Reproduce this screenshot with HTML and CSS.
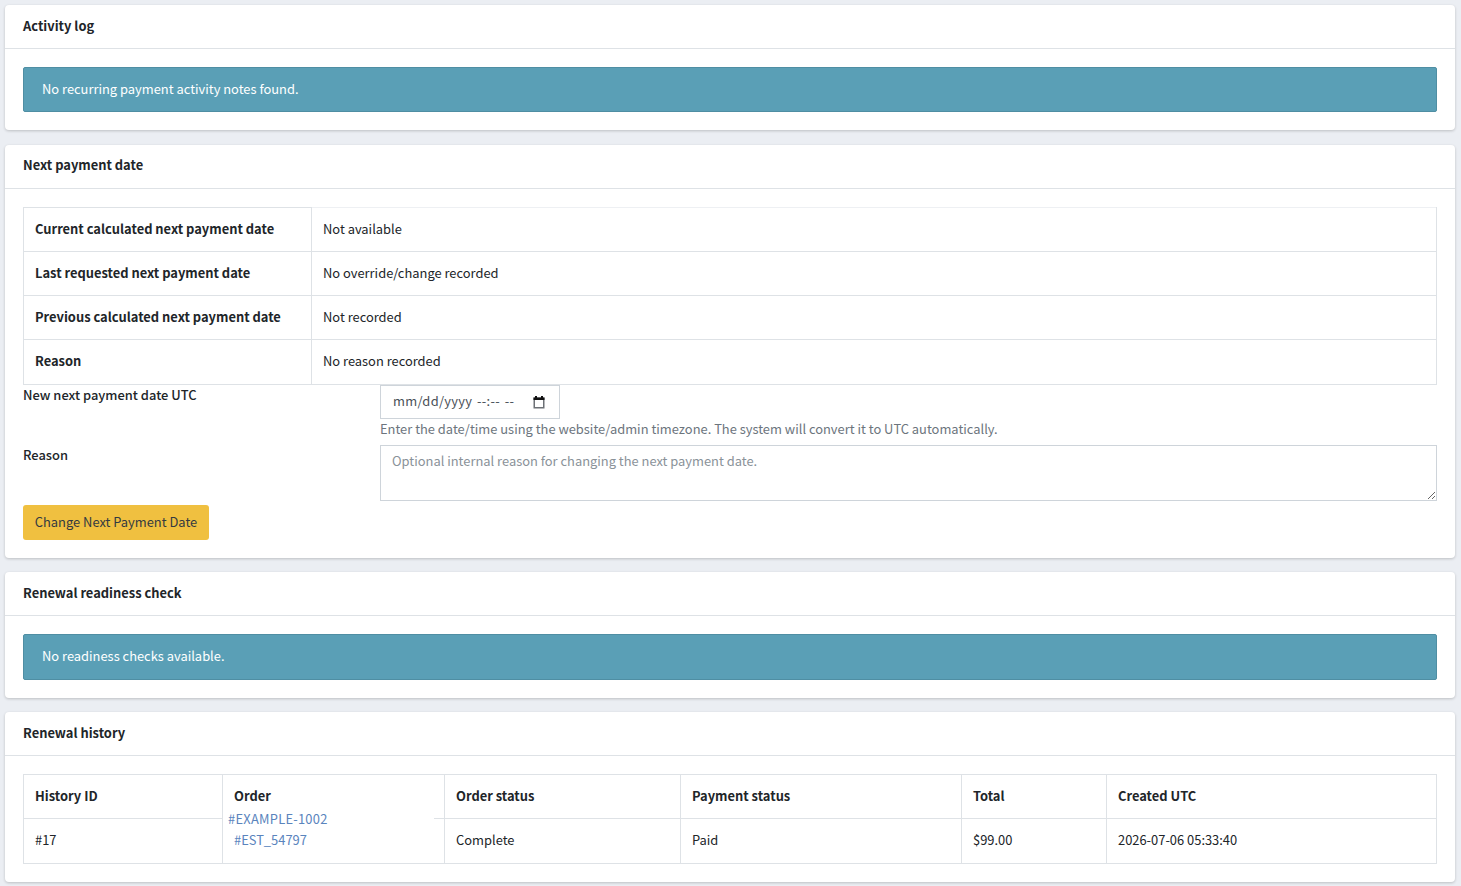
FILE: index.html
```html
<!DOCTYPE html>
<html lang="en">
<head>
    <meta charset="UTF-8">
    <meta name="viewport" content="width=device-width, initial-scale=1.0">
    <title>Recurring payment</title>
    <link rel="stylesheet" href="styles.css">
</head>
<body>
    <section class="card">
        <h3 class="card-header">Activity log</h3>
        <div class="card-body">
            <div class="alert">No recurring payment activity notes found.</div>
        </div>
    </section>

    <section class="card">
        <h3 class="card-header card-header-next">Next payment date</h3>
        <div class="card-body">
            <table class="table table-details">
                <tr>
                    <th>Current calculated next payment date</th>
                    <td>Not available</td>
                </tr>
                <tr>
                    <th>Last requested next payment date</th>
                    <td>No override/change recorded</td>
                </tr>
                <tr>
                    <th>Previous calculated next payment date</th>
                    <td>Not recorded</td>
                </tr>
                <tr class="last-row">
                    <th>Reason</th>
                    <td>No reason recorded</td>
                </tr>
            </table>

            <form class="date-form">
                <label for="nextDate">New next payment date UTC</label>
                <div class="field">
                    <div class="date-input">
                        <input type="text" id="nextDate" value="mm/dd/yyyy --:-- --">
                        <svg class="date-icon" width="14" height="14" viewBox="0 0 14 14">
                            <path d="M3 1h2v1.5h4V1h2v1.5h1.5v11h-11v-11H3z" fill="#6d7176"/>
                            <path d="M3 1h2v1.5h4V1h2v1.5h1.5V5h-11V2.5H3z" fill="#111"/>
                            <rect x="3" y="5" width="8" height="7" fill="#fff"/>
                        </svg>
                    </div>
                    <small class="help">Enter the date/time using the website/admin timezone. The system will convert it to UTC automatically.</small>
                </div>

                <label for="reason">Reason</label>
                <div class="field">
                    <textarea id="reason" class="reason-input" placeholder="Optional internal reason for changing the next payment date."></textarea>
                </div>

                <button type="button" class="btn-warning">Change Next Payment Date</button>
            </form>
        </div>
    </section>

    <section class="card">
        <h3 class="card-header">Renewal readiness check</h3>
        <div class="card-body">
            <div class="alert alert-tall">No readiness checks available.</div>
        </div>
    </section>

    <section class="card">
        <h3 class="card-header">Renewal history</h3>
        <div class="card-body">
            <table class="table table-history">
                <colgroup>
                    <col class="col-id">
                    <col class="col-order">
                    <col class="col-status">
                    <col class="col-payment">
                    <col class="col-total">
                    <col>
                </colgroup>
                <tr>
                    <th>History ID</th>
                    <th>Order</th>
                    <th>Order status</th>
                    <th>Payment status</th>
                    <th>Total</th>
                    <th>Created UTC</th>
                </tr>
                <tr>
                    <td>#17</td>
                    <td class="order-cell">
                        <a href="#" class="order-ref">#EXAMPLE-1002</a>
                        <a href="#">#EST_54797</a>
                    </td>
                    <td>Complete</td>
                    <td>Paid</td>
                    <td>$99.00</td>
                    <td>2026-07-06 05:33:40</td>
                </tr>
            </table>
        </div>
    </section>
</body>
</html>
```

FILE: styles.css
```css
* {
    font-family: "Noto Sans CJK SC", "Noto Sans", sans-serif;
    margin: 0;
    padding: 0;
    box-sizing: border-box;
}

html, body {
    height: 886px;
    overflow: hidden;
}

body {
    background-color: #ebeef3;
    color: #212529;
    font-size: 12.9px;
    line-height: 21px;
    padding: 5px 6px 0 5px;
}

/* Cards */
.card {
    background-color: #fff;
    border-radius: 4px;
    box-shadow: 0 1px 3px rgba(0, 0, 0, 0.2);
    margin-bottom: 14px;
}

.card:first-child {
    margin-bottom: 15px;
}

.card-header {
    font-size: 12.9px;
    font-weight: 700;
    line-height: 21px;
    padding: 10px 18px 12px;
    height: 44px;
    border-bottom: 1px solid #dee2e6;
}

.card-header-next {
    padding-top: 9px;
}

.card-body {
    padding: 18px;
}

/* Alerts */
.alert {
    background-color: #5a9fb6;
    border: 1px solid #4f8ea3;
    border-radius: 2px;
    color: #fff;
    height: 45px;
    padding: 10px 18px 12px;
}

.alert-tall {
    height: 46px;
}

/* Tables */
.table {
    width: 100%;
    border-collapse: collapse;
    table-layout: fixed;
}

.table th,
.table td {
    border: 1px solid #dee2e6;
    padding: 10px 11px 12px;
    text-align: left;
    vertical-align: top;
    font-weight: 400;
}

.table th {
    font-weight: 700;
}

.table-details th {
    width: 288px;
}

.table-details tr:first-child td {
    border-top-color: #eef0f3;
}

.table-details .last-row th,
.table-details .last-row td {
    height: 45px;
}

.table-history td {
    height: 45px;
    vertical-align: middle;
    padding: 8px 11px 12px;
}

.col-id { width: 199px; }
.col-order { width: 222px; }
.col-status { width: 236px; }
.col-payment { width: 281px; }
.col-total { width: 145px; }

.order-cell {
    position: relative;
}

.order-cell a {
    color: #5a84bd;
    text-decoration: none;
}

.order-ref {
    position: absolute;
    left: 0;
    top: -11px;
    width: 211px;
    height: 21px;
    padding-left: 5px;
    background-color: #fff;
    letter-spacing: 0.25px;
}

/* Change date form */
.date-form {
    display: grid;
    grid-template-columns: 357px 1fr;
}

.date-form label {
    font-weight: 500;
    color: #212529;
    margin-top: -1px;
}

.field {
    display: flex;
    flex-direction: column;
    align-items: flex-start;
}

.date-input {
    display: flex;
    align-items: center;
    justify-content: space-between;
    width: 180px;
    height: 34px;
    padding: 0 13px 0 12px;
    border: 1px solid #ced4da;
    background-color: #fff;
}

.date-input input {
    width: 130px;
    height: 21px;
    margin-top: -3px;
    border: none;
    outline: none;
    color: #495057;
    font-size: 12.9px;
    letter-spacing: 0.3px;
    word-spacing: 1.5px;
}

.date-icon {
    flex-shrink: 0;
}

.help {
    color: #6c757d;
    font-size: 12.9px;
    line-height: 21px;
    height: 27px;
    margin-top: -1px;
}

.reason-input {
    display: block;
    width: 100%;
    height: 56px;
    padding: 4px 11px;
    border: 1px solid #ced4da;
    font-size: 12.9px;
    line-height: 21px;
    color: #495057;
    margin-bottom: 4px;
}

.reason-input::placeholder {
    color: #8a9299;
}

.btn-warning {
    grid-column: 1 / -1;
    justify-self: start;
    width: 186px;
    height: 35px;
    padding-bottom: 2px;
    border: none;
    border-radius: 3px;
    background-color: #f0c040;
    color: #343a40;
    font-size: 12.9px;
}
```
